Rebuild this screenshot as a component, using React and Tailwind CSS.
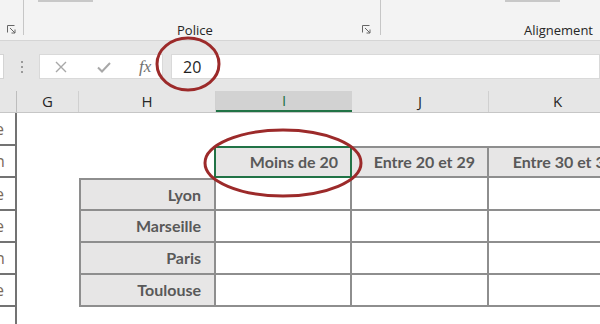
import React from 'react';

const ui = { fontFamily: '"Open Sans", "Noto Sans", sans-serif' };
const cellFont = { fontFamily: 'Lato, "Liberation Sans", sans-serif' };

function Launcher() {
  return (
    <svg width="9" height="9" viewBox="0 0 9 9" className="text-[#666]">
      <path d="M0.5 7.5V0.5h7" fill="none" stroke="currentColor" strokeWidth="1" />
      <path d="M3 3l5 5M8 4.5V8H4.5" fill="none" stroke="currentColor" strokeWidth="1" />
    </svg>
  );
}

const rowLetters = ['e', 'n', 'e', 'e', 'n', 'e', ''];
const rowHeights = [33, 32, 33, 32, 32, 32, 20];

function RowHead({ i }) {
  return (
    <div className="w-[17px] shrink-0 border-r-2 border-b-2 border-[#737373] bg-white flex items-center overflow-hidden">
      <span className="text-[16px] text-[#7a6a5a] leading-none -ml-[5px]" style={ui}>
        {rowLetters[i]}
      </span>
    </div>
  );
}

function Label({ text, top }) {
  return (
    <div
      className={`w-[137px] shrink-0 bg-[#e7e6e6] border-l-2 border-r-2 border-b-2 border-[#8e8e8e] flex items-center justify-end pr-[13px] ${top ? 'border-t-2' : ''}`}
    >
      <span className="text-[16px] font-bold text-[#595959]" style={cellFont}>
        {text}
      </span>
    </div>
  );
}

export default function App() {
  return (
    <div className="relative w-[600px] h-[324px] overflow-hidden bg-white select-none">
      {/* ribbon */}
      <div className="flex h-[41px] bg-[#f3f3f3] border-b border-[#d5d5d5]" style={ui}>
        <div className="w-[24px] shrink-0 flex items-end pb-[6px] pl-[7px]">
          <div className="absolute left-[23px] top-0 h-[35px] w-px bg-[#c6c6c6]" />
          <Launcher />
        </div>
        <div className="w-[357px] shrink-0 flex flex-col">
          <div className="ml-[14px] w-[55px] h-[2px] bg-[#c8c8c8]" />
          <div className="flex-1 flex items-end pb-[3px]">
            <span className="ml-[153px] text-[13px] text-[#262626] leading-none">Police</span>
            <div className="ml-auto mr-[10px] mb-[3px]">
              <Launcher />
            </div>
          </div>
        </div>
        <div className="absolute left-[380px] top-0 h-[35px] w-px bg-[#c6c6c6]" />
        <div className="flex-1 flex flex-col">
          <div className="ml-[124px] w-[55px] h-[2px] bg-[#c8c8c8]" />
          <div className="flex-1 flex items-end justify-end pb-[3px] pr-[7px]">
            <span className="text-[13px] text-[#262626] leading-none">Alignement</span>
          </div>
        </div>
      </div>

      {/* formula bar */}
      <div className="h-[50px] bg-[#e6e6e6] flex items-start pt-[13px]" style={ui}>
        <div className="w-[4px] h-[25px] bg-white border-y border-r border-[#d4d4d4]" />
        <div className="w-[35px] h-[25px] flex flex-col items-center justify-center gap-[3px]">
          <div className="w-[2px] h-[2px] bg-[#9a9a9a]" />
          <div className="w-[2px] h-[2px] bg-[#9a9a9a]" />
          <div className="w-[2px] h-[2px] bg-[#9a9a9a]" />
        </div>
        <div className="w-[124px] h-[25px] bg-white border border-[#d9d9d9] flex items-center">
          <svg width="14" height="14" viewBox="0 0 14 14" className="ml-[14px]">
            <path d="M2 2l10 10M12 2L2 12" stroke="#a8a8a8" strokeWidth="1.4" />
          </svg>
          <svg width="16" height="14" viewBox="0 0 16 14" className="ml-[28px]">
            <path d="M2 7.5l4 4L14 3" fill="none" stroke="#a8a8a8" strokeWidth="2" />
          </svg>
          <span
            className="ml-[27px] text-[17px] italic text-[#707070] leading-none"
            style={{ fontFamily: '"Liberation Serif", "DejaVu Serif", serif' }}
          >
            fx
          </span>
        </div>
        <div className="w-[8px]" />
        <div className="flex-1 h-[25px] bg-white border border-[#d9d9d9] flex items-center pl-[11px]">
          <span className="text-[16px] text-[#1f1f1f] leading-none">20</span>
        </div>
      </div>

      {/* column headers */}
      <div className="flex h-[22px] bg-[#e6e6e6] border-b border-[#c6c6c6] text-[15px] text-[#262626]" style={ui}>
        <div className="w-[17px] shrink-0 border-r border-[#bdbdbd]" />
        <div className="w-[62px] shrink-0 border-r border-[#d0d0d0] flex items-center justify-center">G</div>
        <div className="w-[137px] shrink-0 border-r border-[#d0d0d0] flex items-center justify-center">H</div>
        <div className="w-[136px] shrink-0 bg-[#d2d2d2] border-b-2 border-[#217346] flex items-center justify-center text-[#217346]">
          I
        </div>
        <div className="w-[137px] shrink-0 border-r border-[#d0d0d0] flex items-center justify-center">J</div>
        <div className="w-[137px] shrink-0 flex items-center justify-center">K</div>
      </div>

      {/* sheet rows */}
      <div className="flex flex-col">
        <div className="flex" style={{ height: rowHeights[0] }}>
          <RowHead i={0} />
        </div>
        <div className="flex" style={{ height: rowHeights[1] }}>
          <RowHead i={1} />
          <div className="w-[62px] shrink-0" />
          <div className="w-[137px] shrink-0" />
          <div className="w-[138px] shrink-0 -ml-[2px] bg-[#e7e6e6] border-2 border-[#217346] flex items-center justify-end pr-[12px]">
            <span className="text-[16px] font-bold text-[#595959]" style={cellFont}>
              Moins de 20
            </span>
          </div>
          <div className="w-[137px] shrink-0 bg-[#e7e6e6] border-t-2 border-r-2 border-b-2 border-[#8e8e8e] flex items-center justify-end pr-[12px]">
            <span className="text-[16px] font-bold text-[#595959]" style={cellFont}>
              Entre 20 et 29
            </span>
          </div>
          <div className="w-[137px] shrink-0 bg-[#e7e6e6] border-t-2 border-b-2 border-[#8e8e8e] flex items-center justify-end pr-[12px] overflow-hidden whitespace-nowrap">
            <span className="text-[16px] font-bold text-[#595959]" style={cellFont}>
              Entre 30 et 39
            </span>
          </div>
        </div>
        {['Lyon', 'Marseille', 'Paris', 'Toulouse'].map((city, k) => (
          <div key={city} className="flex" style={{ height: rowHeights[k + 2] }}>
            <RowHead i={k + 2} />
            <div className="w-[62px] shrink-0" />
            <Label text={city} top={k === 0} />
            <div className="w-[136px] shrink-0 border-r-2 border-b-2 border-[#8e8e8e]" />
            <div className="w-[137px] shrink-0 border-r-2 border-b-2 border-[#8e8e8e]" />
            <div className="w-[137px] shrink-0 border-b-2 border-[#8e8e8e]" />
          </div>
        ))}
        <div className="flex" style={{ height: rowHeights[6] }}>
          <div className="w-[17px] shrink-0 border-r-2 border-[#737373]" />
        </div>
      </div>

      {/* annotation circles */}
      <svg className="absolute left-0 top-0 pointer-events-none" width="600" height="324">
        <ellipse cx="188" cy="64" rx="31" ry="26" fill="none" stroke="#9c2a2a" strokeWidth="3" />
        <ellipse cx="283" cy="163" rx="78" ry="33" fill="none" stroke="#9c2a2a" strokeWidth="3" />
      </svg>
    </div>
  );
}
